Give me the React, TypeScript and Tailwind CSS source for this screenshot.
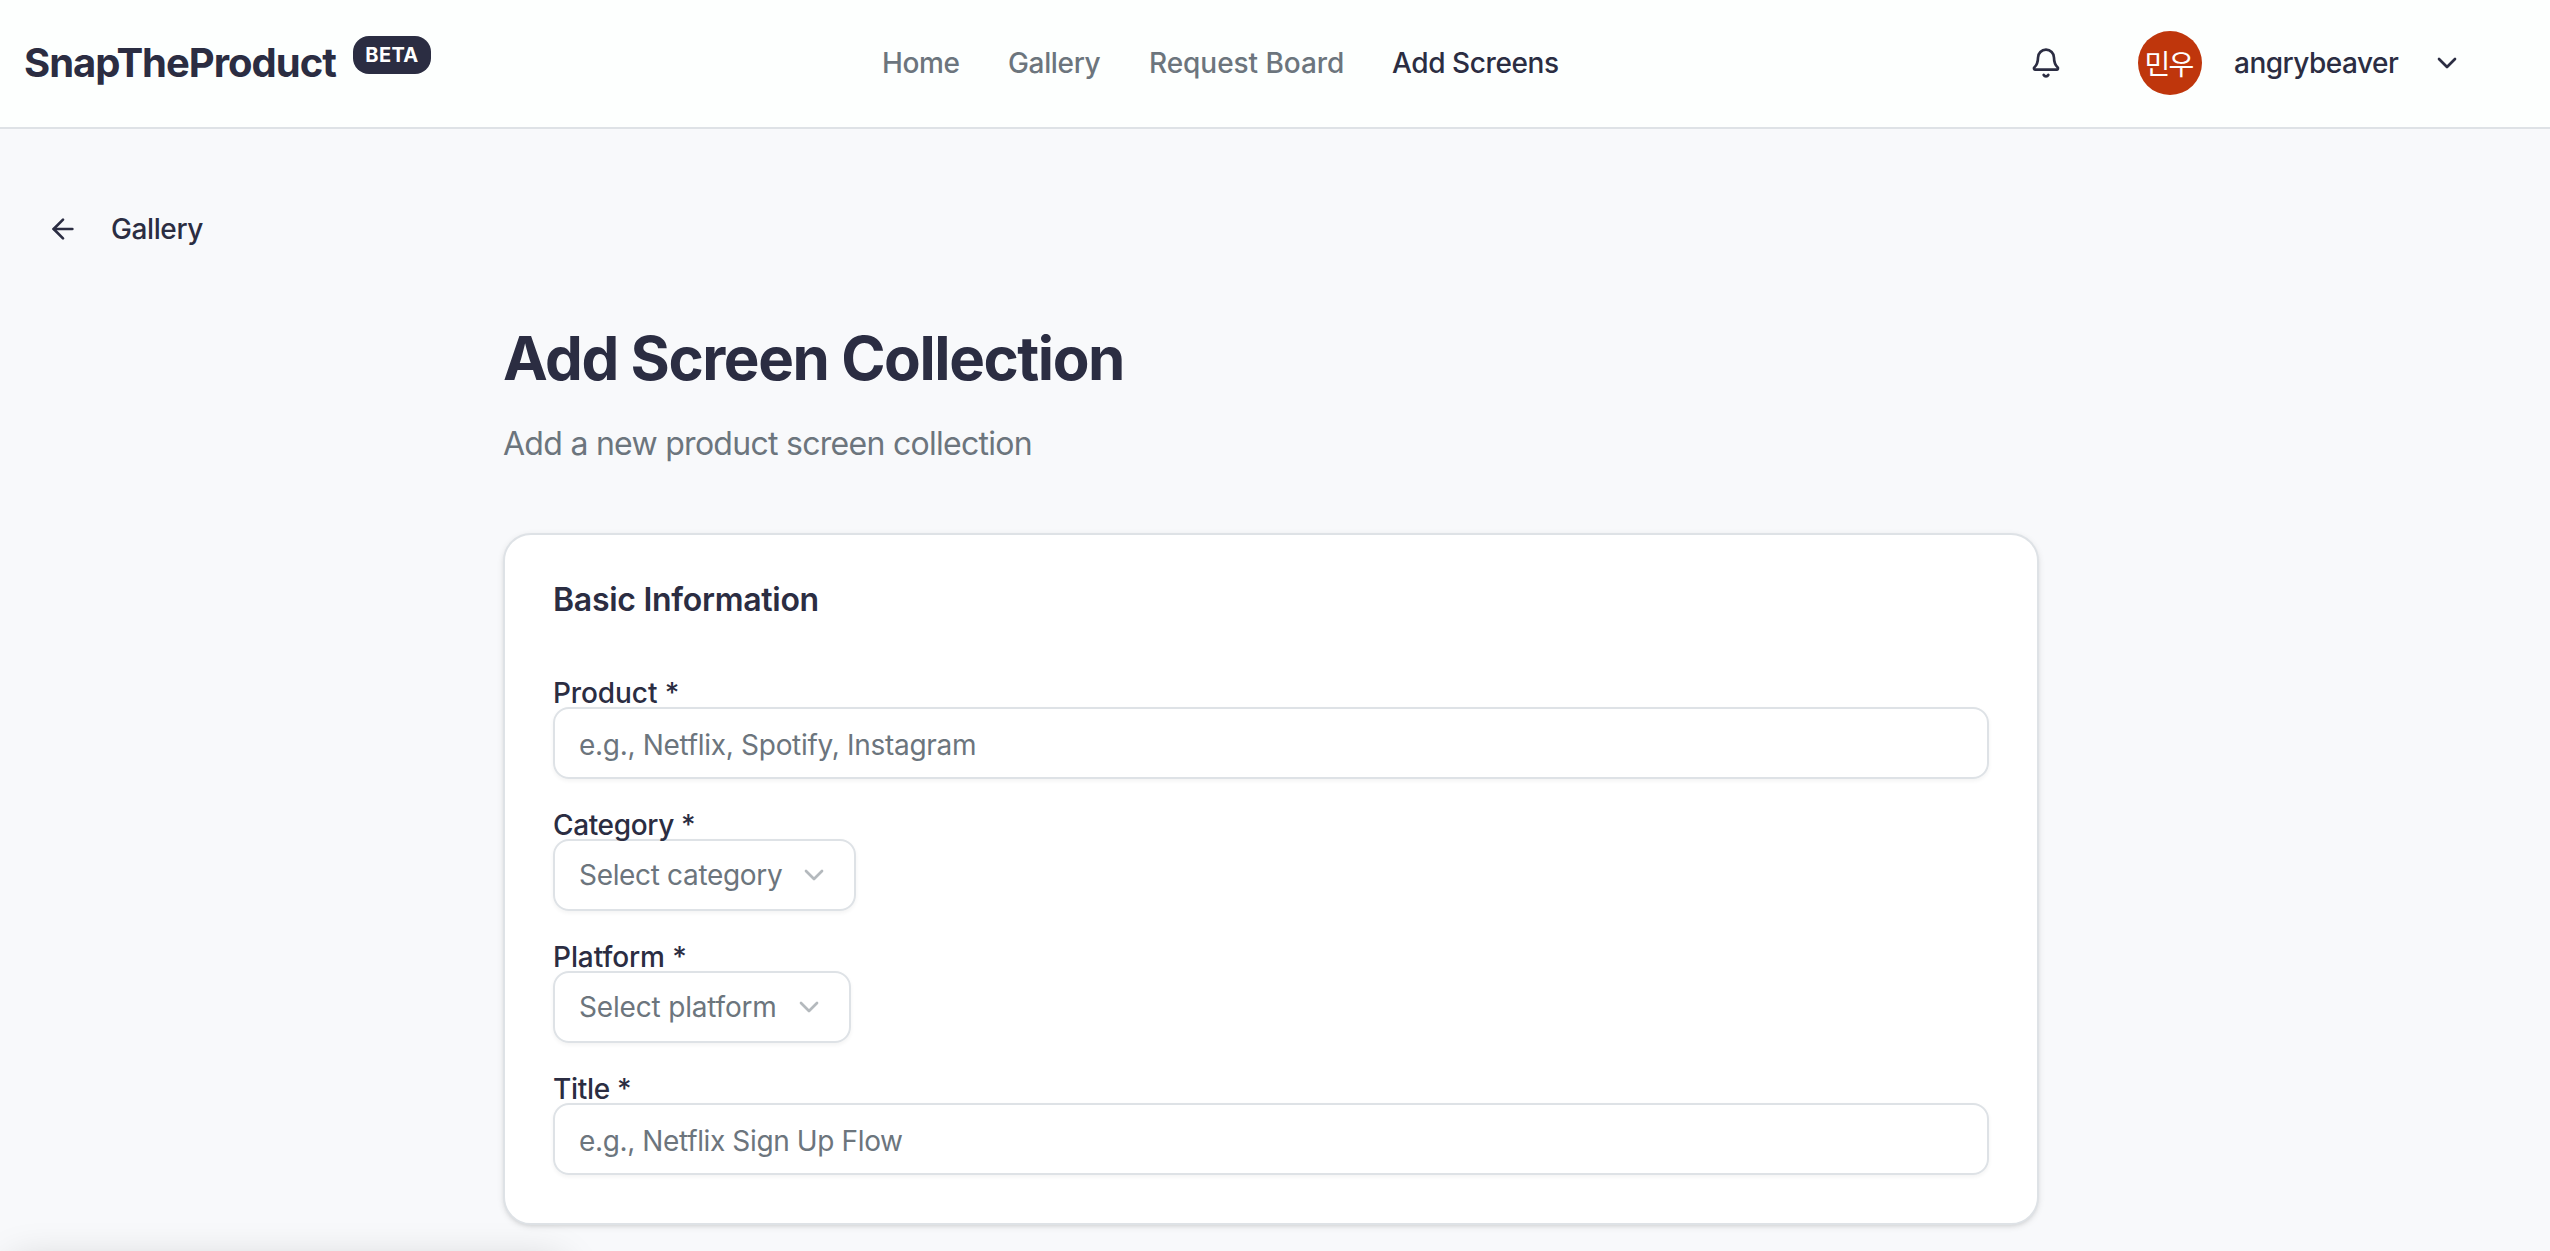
import { ArrowLeft, Bell, ChevronDown } from "lucide-react";
import type { ReactNode } from "react";

const fieldBox =
  "h-[72px] rounded-2xl border-2 border-[#dee2e6] bg-transparent px-6 text-[28px] shadow-[0_2px_4px_rgba(0,0,0,0.05)]";

function Field({ label, spacing, children }: { label: string; spacing: string; children: ReactNode }) {
  return (
    <div>
      <label className={`block text-[28px] leading-7 font-medium ${spacing}`}>{label}</label>
      {children}
    </div>
  );
}

function TextInput({ placeholder, spacing }: { placeholder: string; spacing: string }) {
  return (
    <input
      type="text"
      placeholder={placeholder}
      className={`block w-full pt-[3px] outline-none placeholder:text-[#6c757d] ${fieldBox} ${spacing}`}
    />
  );
}

function SelectBox({ text, size }: { text: string; size: string }) {
  return (
    <button type="button" className={`flex items-center justify-between whitespace-nowrap text-[#6c757d] ${fieldBox} ${size}`}>
      <span>{text}</span>
      <ChevronDown className="size-8 shrink-0 opacity-50" />
    </button>
  );
}

function Header() {
  return (
    <header className="flex h-[129px] items-center border-b-2 border-[#dee2e6] bg-[#fdfffe] pb-px pl-6">
      <div className="flex w-[858px] items-center">
        <span className="w-[329px] text-[40px] leading-none font-bold tracking-[-1px]">SnapTheProduct</span>
        <span className="-mt-4 flex h-[38px] w-[78px] items-center justify-center rounded-2xl bg-[#2b2d42] text-xl font-bold tracking-[0.35px] text-white">
          BETA
        </span>
      </div>
      <nav className="flex w-[1148px] items-center gap-12 text-[28px] font-medium whitespace-nowrap text-[#6c757d]">
        <a className="w-[78px] tracking-[-0.4px]">Home</a>
        <a className="w-[93px] tracking-[-0.35px]">Gallery</a>
        <a className="w-[195px] tracking-[-0.05px]">Request Board</a>
        <a className="tracking-[-0.4px] text-[#2b2d42]">Add Screens</a>
      </nav>
      <div className="flex items-center">
        <Bell className="size-8" />
        <div className="ml-[76px] flex size-16 items-center justify-center rounded-full bg-[#bf360c] pr-[3px] pb-px font-['Noto_Sans_CJK_KR',sans-serif] text-[28px] leading-none tracking-[-1.7px] text-white">
          민우
        </div>
        <span className="ml-8 w-[197px] text-[28px] font-medium tracking-[-0.51px]">angrybeaver</span>
        <ChevronDown className="size-8" />
      </div>
    </header>
  );
}

export default function App() {
  return (
    <div className="relative h-[1251px] w-full overflow-hidden bg-[#f8f9fb] font-['Inter',sans-serif] text-[#2b2d42]">
      <Header />
      <main className="pt-16">
        <div className="flex h-[72px] items-center pl-[47px]">
          <ArrowLeft className="size-8" />
          <span className="ml-8 text-[28px] font-medium tracking-[-0.4px]">Gallery</span>
        </div>

        <div className="ml-[503px] w-[1536px] pt-[57px]">
          <h1 className="text-[60px] leading-[72px] font-bold tracking-[-1.43px]">Add Screen Collection</h1>
          <p className="mt-[26px] text-[32px] leading-[48px] tracking-[-0.72px] text-[#6c757d]">
            Add a new product screen collection
          </p>

          <section className="mt-[65px] rounded-[28px] border-2 border-[#dee2e6] bg-white px-12 pt-[49px] pb-12 shadow-[0_2px_6px_rgba(0,0,0,0.1),0_2px_4px_-2px_rgba(0,0,0,0.1)]">
            <h2 className="text-[32px] leading-8 font-semibold tracking-[-0.28px]">Basic Information</h2>
            <form className="mt-[63px] flex flex-col gap-8">
              <Field label="Product *" spacing="tracking-[-0.1px]">
                <TextInput placeholder="e.g., Netflix, Spotify, Instagram" spacing="tracking-[-0.3px]" />
              </Field>
              <Field label="Category *" spacing="tracking-[-0.36px]">
                <SelectBox text="Select category" size="w-[303px] tracking-[-0.33px]" />
              </Field>
              <Field label="Platform *" spacing="tracking-[-0.08px]">
                <SelectBox text="Select platform" size="w-[298px] tracking-[-0.18px]" />
              </Field>
              <Field label="Title *" spacing="tracking-[-0.31px]">
                <TextInput placeholder="e.g., Netflix Sign Up Flow" spacing="tracking-[-0.37px]" />
              </Field>
            </form>
          </section>
        </div>
      </main>
      <div className="absolute top-[1262px] left-3 h-14 w-[550px] shadow-[0_0_40px_rgba(0,0,0,0.18)]" />
    </div>
  );
}
